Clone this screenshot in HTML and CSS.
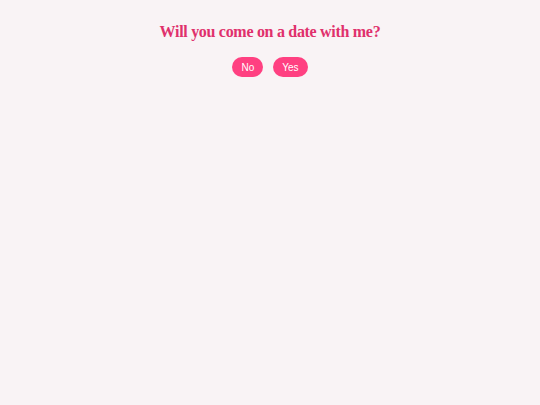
FILE: index.html
```html
<!DOCTYPE html>
<html lang="en">
<head>
  <meta charset="UTF-8">
  <meta name="viewport" content="width=device-width, initial-scale=1.0">
  <title>Will you come on a date with me?</title>
  <link rel="stylesheet" href="styles.css">
</head>
<body>

  <div class="container">
    <h1 class="question">Will you come on a date with me?</h1>

    <div class="buttons">
      <button class="btn" id="no">No</button>
      <button class="btn" id="yes">Yes</button>
    </div>
  </div>

</body>
</html>
```

FILE: styles.css
```css
*{
margin: 0;
padding: 0;
box-sizing: border-box;
}

body{
background-color: #f9f3f5;
font-family: 'Liberation Serif', serif;
}

.container{
text-align: center;
padding-top: 22px;
}

.question{
color: #e0306c;
font-size: 16px;
font-weight: bold;
line-height: 20px;
letter-spacing: -0.3px;
}

.buttons{
display: flex;
justify-content: center;
gap: 10px;
margin-top: 15px;
}

.btn{
background-color: #ff4081;
color: #fff;
border: none;
border-radius: 10px;
font-family: 'Liberation Sans', sans-serif;
font-size: 10px;
height: 20px;
padding: 0 9px;
cursor: pointer;
}
```
